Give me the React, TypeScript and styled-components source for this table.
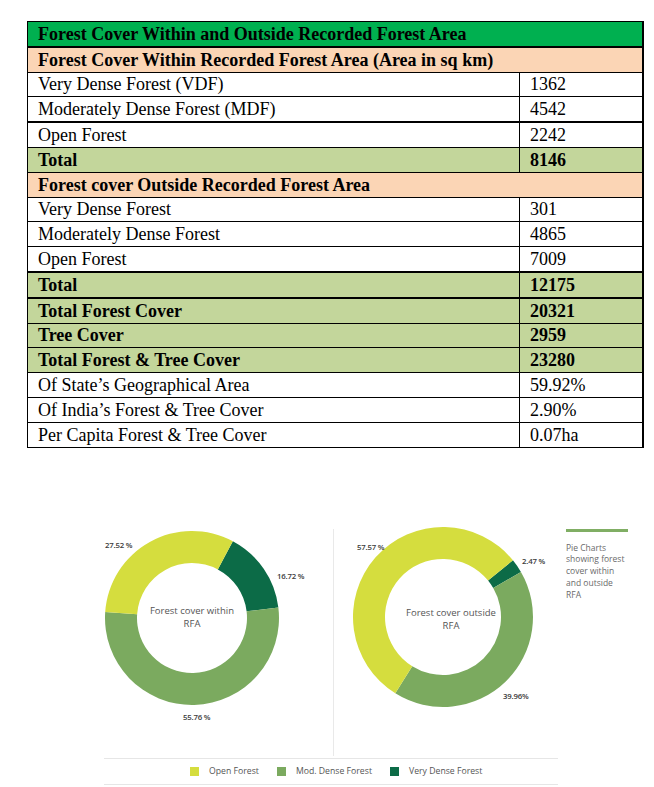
import React from "react";
import styled, { createGlobalStyle } from "styled-components";

const GlobalStyle = createGlobalStyle`
  html, body {
    margin: 0;
    padding: 0;
    background: #fff;
  }
  body {
    width: 654px;
    height: 787px;
    overflow: hidden;
  }
`;

const Page = styled.div`
  width: 654px;
  height: 787px;
  font-family: "Liberation Serif", "Times New Roman", serif;
  color: #000;
`;

const StatsTable = styled.table`
  margin: 21px 0 0 27px;
  width: 617px;
  table-layout: fixed;
  border-collapse: collapse;
  font-size: 18px;
  border: 1px solid #000;
  border-right-width: 2px;
`;

const LabelCol = styled.col`
  width: 492px;
`;

const tones = {
  title: "#00b050",
  section: "#fbd5b5",
  total: "#c3d69b",
  plain: "#ffffff",
};

type Tone = keyof typeof tones;

const Row = styled.tr<{ $tone: Tone; $thick?: boolean }>`
  background: ${(p) => tones[p.$tone]};
  font-weight: ${(p) => (p.$tone === "plain" ? 400 : 700)};

  td {
    border-top-width: ${(p) => (p.$thick ? "2px" : "1px")};
  }
`;

const Cell = styled.td`
  height: 23.8px;
  padding: 0 10px;
  border: 1px solid #000;
  line-height: 22px;
  white-space: nowrap;
  overflow: hidden;
`;

type TableRow = { label: string; value?: string; tone: Tone; thick?: boolean };

const rows: TableRow[] = [
  { label: "Forest Cover Within and Outside Recorded Forest Area", tone: "title" },
  { label: "Forest Cover Within Recorded Forest Area (Area in sq km)", tone: "section", thick: true },
  { label: "Very Dense Forest (VDF)", value: "1362", tone: "plain" },
  { label: "Moderately Dense Forest (MDF)", value: "4542", tone: "plain" },
  { label: "Open Forest", value: "2242", tone: "plain", thick: true },
  { label: "Total", value: "8146", tone: "total" },
  { label: "Forest cover Outside Recorded Forest Area", tone: "section" },
  { label: "Very Dense Forest", value: "301", tone: "plain" },
  { label: "Moderately Dense Forest", value: "4865", tone: "plain" },
  { label: "Open Forest", value: "7009", tone: "plain" },
  { label: "Total", value: "12175", tone: "total", thick: true },
  { label: "Total Forest Cover", value: "20321", tone: "total", thick: true },
  { label: "Tree Cover", value: "2959", tone: "total" },
  { label: "Total Forest & Tree Cover", value: "23280", tone: "total" },
  { label: "Of State\u2019s Geographical Area", value: "59.92%", tone: "plain" },
  { label: "Of India\u2019s Forest & Tree Cover", value: "2.90%", tone: "plain" },
  { label: "Per Capita Forest & Tree Cover", value: "0.07ha", tone: "plain" },
];

/* ---------- chart figure ---------- */

const Figure = styled.div`
  margin: 76px 0 0 90px;
  width: 564px;
  font-family: "Open Sans", "Noto Sans", sans-serif;
`;

const ChartRow = styled.div`
  display: flex;
  height: 234px;
`;

const DonutBox = styled.div<{ $w: number }>`
  flex: none;
  width: ${(p) => p.$w}px;

  svg {
    display: block;
  }
`;

const Divider = styled.div`
  flex: none;
  width: 1px;
  height: 227px;
  margin-top: 5px;
  background: #e9e9e9;
`;

const Note = styled.div`
  flex: none;
  width: 62px;
  padding-top: 5px;
  font-size: 8.5px;
  line-height: 11.9px;
  color: #6a6a6a;
`;

const NoteBar = styled.div`
  height: 3px;
  margin-bottom: 10px;
  background: #80ae64;
`;

const Legend = styled.div`
  box-sizing: border-box;
  margin-left: 14px;
  width: 454px;
  height: 27px;
  padding-left: 86px;
  display: flex;
  align-items: center;
  gap: 18px;
  border-top: 1px solid #e6e6e6;
  border-bottom: 1px solid #e6e6e6;
  font-size: 8.7px;
  color: #555;
`;

const LegendItem = styled.div`
  display: flex;
  align-items: center;
  gap: 10px;
`;

const Swatch = styled.span<{ $c: string }>`
  width: 9px;
  height: 9px;
  background: ${(p) => p.$c};
`;

const PctLabel = styled.text`
  font-family: "Open Sans", "Noto Sans", sans-serif;
  font-size: 7.8px;
  font-weight: 600;
  letter-spacing: -0.2px;
  fill: #3a3a3a;
`;

const CenterLabel = styled.text`
  font-family: "Open Sans", "Noto Sans", sans-serif;
  font-size: 9.5px;
  fill: #555;
  text-anchor: middle;
`;

const YELLOW = "#d5dd3e";
const MOD = "#7baa5f";
const DARK = "#0c6b47";

type Slice = { from: number; to: number; color: string };

const pt = (cx: number, cy: number, rad: number, deg: number) => {
  const a = (deg * Math.PI) / 180;
  return `${(cx + rad * Math.sin(a)).toFixed(2)} ${(cy - rad * Math.cos(a)).toFixed(2)}`;
};

const wedge = (cx: number, cy: number, R: number, r: number, a0: number, a1: number) => {
  const large = a1 - a0 > 180 ? 1 : 0;
  return [
    `M ${pt(cx, cy, R, a0)}`,
    `A ${R} ${R} 0 ${large} 1 ${pt(cx, cy, R, a1)}`,
    `L ${pt(cx, cy, r, a1)}`,
    `A ${r} ${r} 0 ${large} 0 ${pt(cx, cy, r, a0)}`,
    "Z",
  ].join(" ");
};

type Pct = { text: string; x: number; y: number };

const Donut = (props: {
  w: number;
  cx: number;
  cy: number;
  R: number;
  r: number;
  slices: Slice[];
  pcts: Pct[];
  title: string[];
  tx: number;
  ty: number;
}) => (
  <DonutBox $w={props.w}>
    <svg width={props.w} height={234} viewBox={`0 0 ${props.w} 234`}>
      {props.slices.map((s, i) => (
        <path key={i} d={wedge(props.cx, props.cy, props.R, props.r, s.from, s.to)} fill={s.color} />
      ))}
      {props.pcts.map((p) => (
        <PctLabel key={p.text} x={p.x} y={p.y}>
          {p.text}
        </PctLabel>
      ))}
      {props.title.map((t, i) => (
        <CenterLabel key={t} x={props.tx} y={props.ty + i * 13}>
          {t}
        </CenterLabel>
      ))}
    </svg>
  </DonutBox>
);

const App = () => (
  <Page>
    <GlobalStyle />
    <StatsTable>
      <colgroup>
        <LabelCol />
        <col />
      </colgroup>
      <tbody>
        {rows.map((row, i) => (
          <Row key={i} $tone={row.tone} $thick={row.thick}>
            {row.value === undefined ? (
              <Cell colSpan={2}>{row.label}</Cell>
            ) : (
              <>
                <Cell>{row.label}</Cell>
                <Cell>{row.value}</Cell>
              </>
            )}
          </Row>
        ))}
      </tbody>
    </StatsTable>

    <Figure>
      <ChartRow>
        <Donut
          w={243}
          cx={102}
          cy={94}
          R={87}
          r={55}
          slices={[
            { from: 28, to: 83, color: DARK },
            { from: 83, to: 274, color: MOD },
            { from: 274, to: 388, color: YELLOW },
          ]}
          pcts={[
            { text: "27.52 %", x: 15, y: 24 },
            { text: "16.72 %", x: 187, y: 55 },
            { text: "55.76 %", x: 93, y: 196 },
          ]}
          title={["Forest cover within", "RFA"]}
          tx={102}
          ty={90}
        />
        <Divider />
        <Donut
          w={232}
          cx={109}
          cy={93}
          R={90}
          r={58}
          slices={[
            { from: 51, to: 60, color: DARK },
            { from: 60, to: 212, color: MOD },
            { from: 212, to: 411, color: YELLOW },
          ]}
          pcts={[
            { text: "57.57 %", x: 23, y: 26 },
            { text: "2.47 %", x: 188, y: 40 },
            { text: "39.96%", x: 169, y: 175 },
          ]}
          title={["Forest cover outside", "RFA"]}
          tx={117}
          ty={92}
        />
        <Note>
          <NoteBar />
          Pie Charts showing forest cover within and outside RFA
        </Note>
      </ChartRow>
      <Legend>
        <LegendItem>
          <Swatch $c={YELLOW} />
          Open Forest
        </LegendItem>
        <LegendItem>
          <Swatch $c={MOD} />
          Mod. Dense Forest
        </LegendItem>
        <LegendItem>
          <Swatch $c={DARK} />
          Very Dense Forest
        </LegendItem>
      </Legend>
    </Figure>
  </Page>
);

export default App;
